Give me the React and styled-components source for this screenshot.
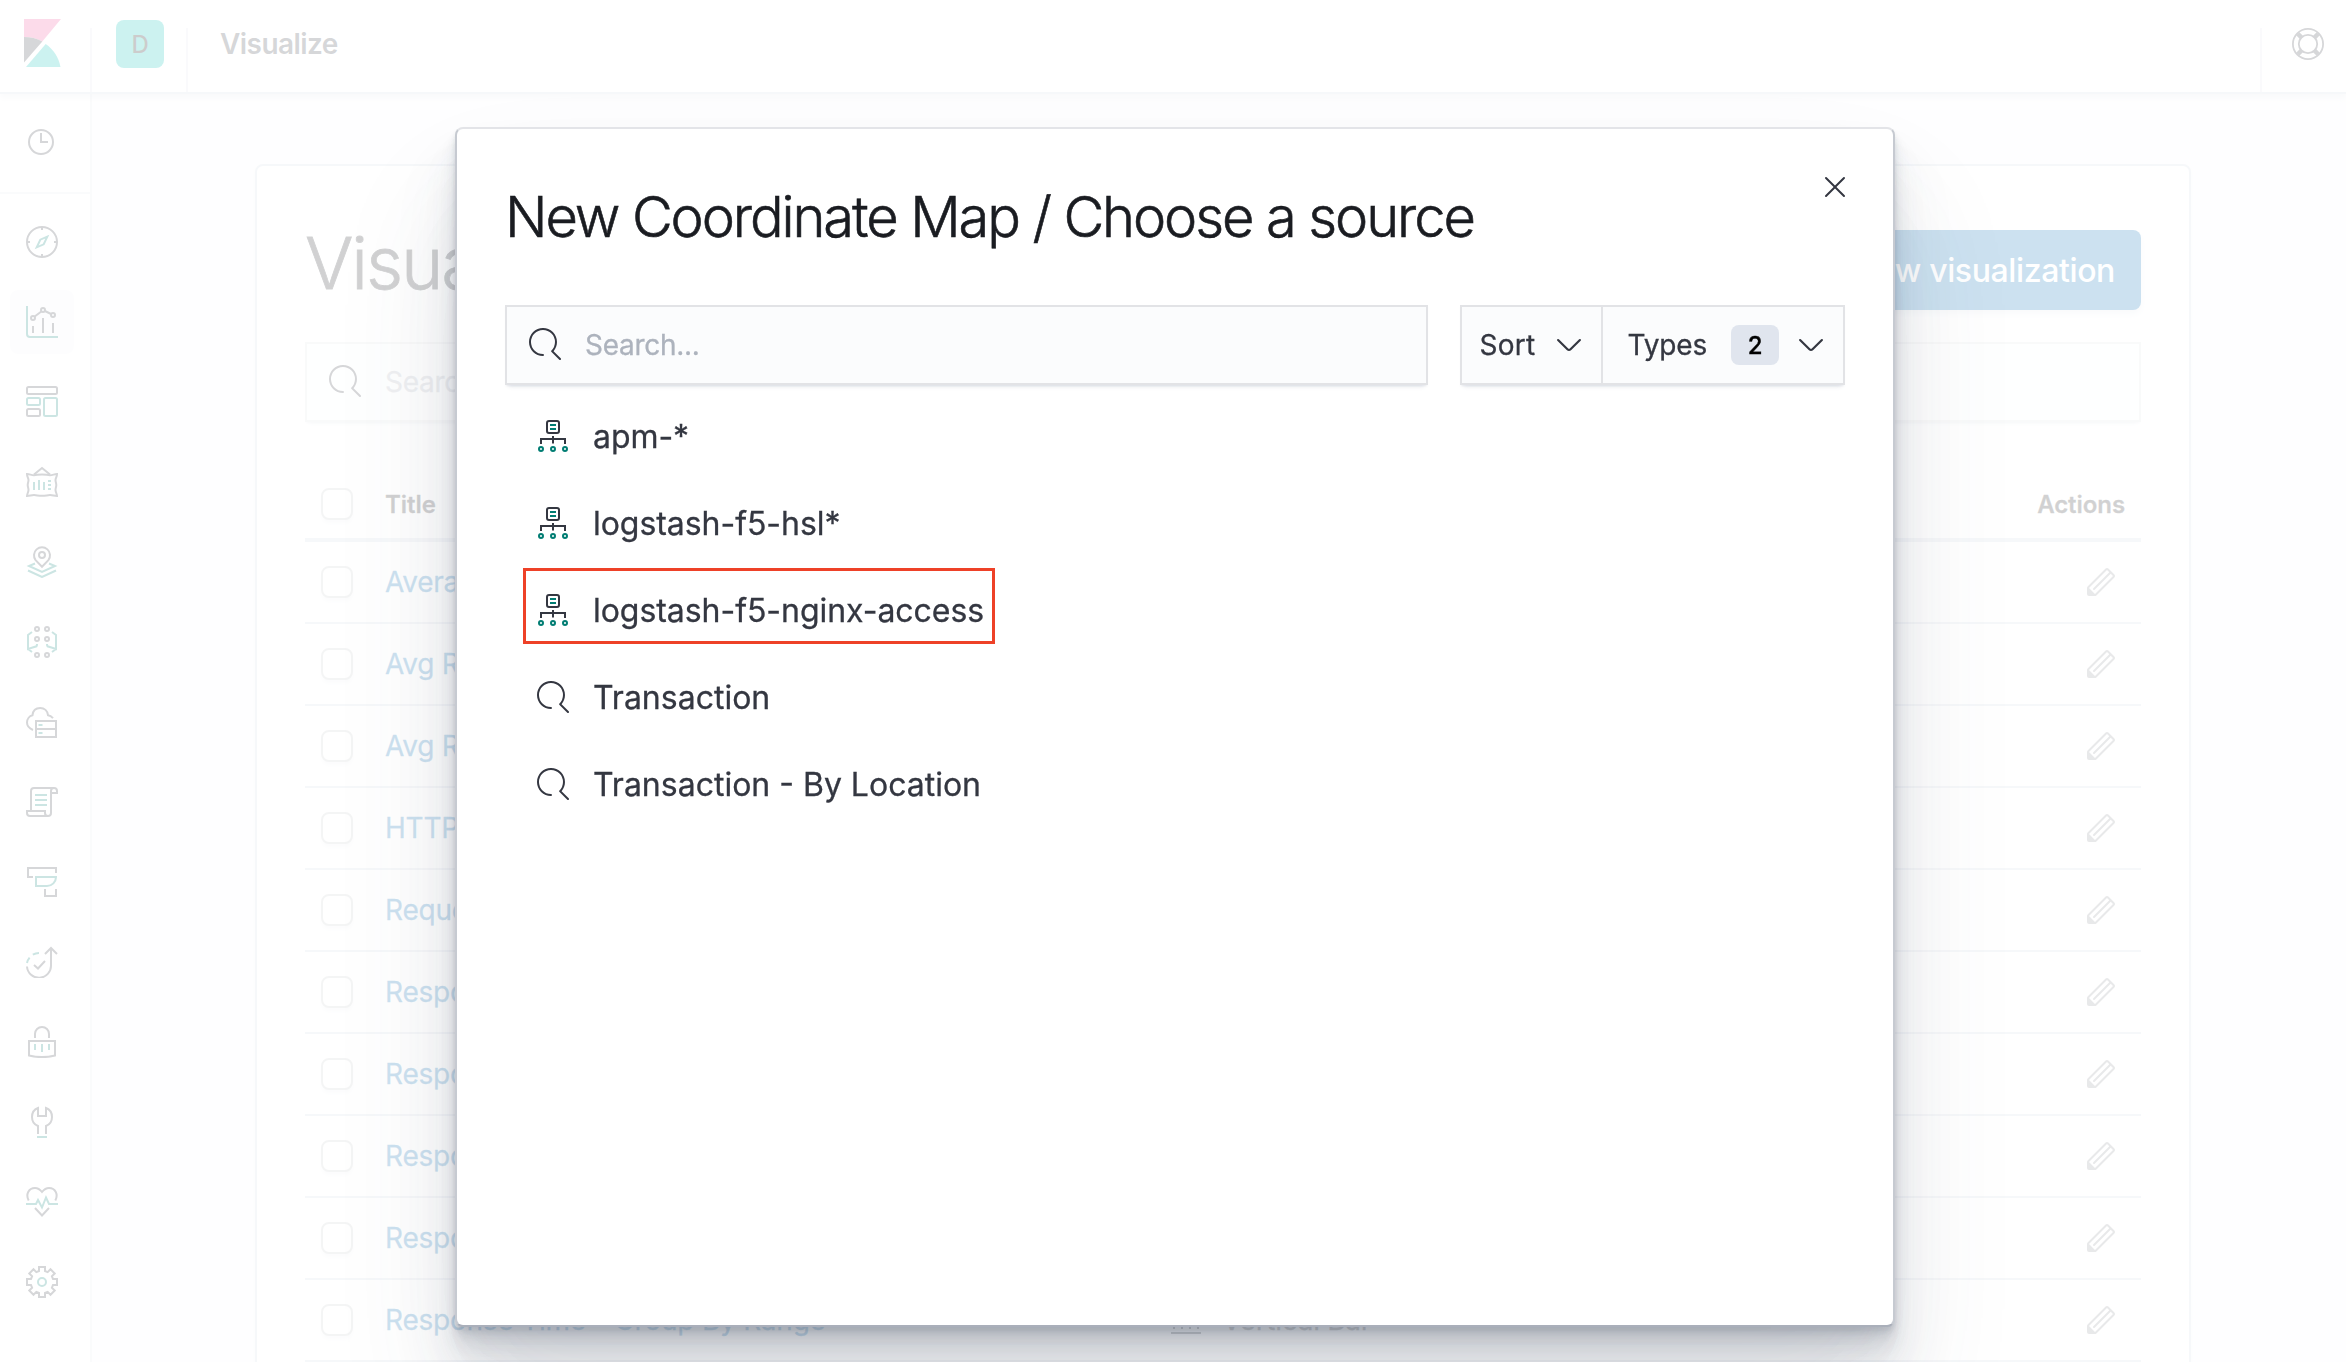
import React from "react";
import styled, { createGlobalStyle, css } from "styled-components";

const INK = "#343741";
const TEAL = "#017d73";
const LINE = "#d3dae6";

const GlobalStyle = createGlobalStyle`
  *, *::before, *::after { box-sizing: border-box; }
  html, body { margin: 0; padding: 0; }
  body {
    width: 2346px;
    height: 1362px;
    overflow: hidden;
    background: #fff;
    color: ${INK};
    font-family: Inter, "Liberation Sans", sans-serif;
    font-size: 28px;
    letter-spacing: -0.005em;
  }
`;

/* ---------- page shell ---------- */

const Page = styled.div`
  display: flex;
  flex-direction: column;
  width: 2346px;
  height: 1362px;
  overflow: hidden;
`;

const Header = styled.header`
  display: flex;
  flex: none;
  align-items: flex-end;
  height: 94px;
  border-bottom: 2px solid ${LINE};
  box-shadow: 0 4px 6px rgba(152, 162, 179, 0.25);
  z-index: 1;
`;

const HeaderCell = styled.div`
  display: flex;
  align-items: center;
  height: 92px;
  padding: 0 0 4px ${(p) => p.$left || 0}px;
  width: ${(p) => (p.$width ? `${p.$width}px` : "auto")};
  flex: ${(p) => (p.$grow ? "1" : "none")};
`;

const LogoCell = styled(HeaderCell)`
  padding-bottom: 6px;
`;

const HeaderRule = styled.div`
  flex: none;
  width: 2px;
  height: 64px;
  background: #e3e7ee;
`;

const SpaceBadge = styled.div`
  display: flex;
  align-items: center;
  justify-content: center;
  width: 48px;
  height: 48px;
  border-radius: 8px;
  background: #00bfb3;
  color: #000;
  font-size: 24px;
  font-weight: 500;
`;

const Breadcrumb = styled.span`
  font-weight: 600;
  letter-spacing: -0.02em;
  line-height: 40px;
`;

const Body = styled.div`
  display: flex;
  flex: 1;
  min-height: 0;
`;

const SideNav = styled.nav`
  display: flex;
  flex: none;
  flex-direction: column;
  width: 92px;
  border-right: 2px solid #e6e9ef;
  background: #fff;
  box-shadow: 2px 0 3px rgba(152, 162, 179, 0.12);
`;

const RecentItem = styled.div`
  display: flex;
  align-items: center;
  height: 100px;
  padding-left: 28px;
  padding-bottom: 2px;
  border-bottom: 2px solid #e6e9ef;
`;

const NavList = styled.div`
  display: flex;
  flex-direction: column;
  gap: 16px;
  padding: 16px 0 0 10px;
`;

const NavItem = styled.div`
  display: flex;
  align-items: center;
  justify-content: center;
  width: 64px;
  height: 64px;
  border-radius: 8px;
  background: ${(p) => (p.$active ? "rgba(211,218,230,0.25)" : "transparent")};
`;

const Main = styled.main`
  flex: 1;
  min-width: 0;
  padding: 70px 155px 0 163px;
  background: #fafbfd;
`;

const Panel = styled.section`
  height: 1300px;
  padding: 64px 48px 0;
  border: 2px solid ${LINE};
  border-radius: 8px;
  background: #fff;
  box-shadow: 0 2px 4px rgba(152, 162, 179, 0.15);
`;

const PanelHead = styled.div`
  display: flex;
  align-items: center;
  justify-content: space-between;
  height: 80px;
`;

const PageTitle = styled.h1`
  margin: -15px 0 0;
  color: #1a1c21;
  font-size: 72px;
  font-weight: 300;
  letter-spacing: -0.03em;
  line-height: 80px;
  -webkit-text-stroke: 0.8px currentColor;
`;

const PrimaryButton = styled.button`
  height: 80px;
  padding: 0 26px;
  border: 0;
  border-radius: 8px;
  background: #006bb4;
  color: #fff;
  font: 500 32px Inter, "Liberation Sans", sans-serif;
  letter-spacing: -0.012em;
  box-shadow: 0 4px 6px rgba(54, 97, 126, 0.15);
`;

/* ---------- form controls ---------- */

const SearchField = styled.div`
  display: flex;
  align-items: center;
  gap: 24px;
  height: 80px;
  padding: 0 22px;
  border: 2px solid #e2e3e6;
  background: #fbfcfd;
  color: #adb3bd;
  letter-spacing: -0.01em;
  -webkit-text-stroke: 0.3px currentColor;
  box-shadow: 0 2px 2px -1px rgba(152, 162, 179, 0.2), 0 6px 4px -4px rgba(152, 162, 179, 0.2);
  svg {
    margin-bottom: 2px;
  }
  ${(p) =>
    p.$width
      ? css`
          width: ${p.$width}px;
          flex: none;
        `
      : css`
          margin-top: 32px;
        `}
`;

const CheckBox = styled.span`
  flex: none;
  width: 32px;
  height: 32px;
  border: 2px solid #c9cbcd;
  border-radius: 8px;
  background: #fff;
  box-shadow: 0 4px 4px -1px rgba(152, 162, 179, 0.2);
`;

/* ---------- table ---------- */

const Table = styled.div`
  display: flex;
  flex-direction: column;
  margin-top: 48px;
`;

const Row = styled.div`
  display: grid;
  grid-template-columns: 64px 785px 1fr auto;
  align-items: center;
  height: ${(p) => (p.$head ? 72 : 82)}px;
  padding: ${(p) => (p.$head ? "0 16px" : "0 24px 0 16px")};
  border-bottom: ${(p) => (p.$head ? 4 : 2)}px solid ${LINE};
  -webkit-text-stroke: 0.3px currentColor;
  ${(p) =>
    p.$head &&
    css`
      color: #1a1c21;
      font-size: 24px;
      font-weight: 600;
      letter-spacing: -0.003em;
    `}
`;

const TitleLink = styled.a`
  color: #006bb4;
  letter-spacing: -0.008em;
  white-space: nowrap;
`;

const TypeCell = styled.span`
  display: flex;
  align-items: center;
  gap: 20px;
  letter-spacing: -0.01em;
`;

const Glyph = styled.svg`
  display: block;
  flex: none;
  width: ${(p) => p.$size || 32}px;
  height: ${(p) => p.$size || 32}px;
  fill: ${(p) => p.$color || INK};
`;

/* ---------- modal ---------- */

const Overlay = styled.div`
  position: fixed;
  inset: 0;
  z-index: 10;
  padding: 127px 0 0 455px;
  background: rgba(255, 255, 255, 0.8);
`;

const Modal = styled.div`
  display: flex;
  flex-direction: column;
  width: 1440px;
  height: 1200px;
  padding: 0 48px;
  border: 2px solid #c6cad1;
  border-top-color: #e3e4e8;
  border-bottom-color: #aaafba;
  border-radius: 8px;
  background: #fff;
  box-shadow: 0 80px 128px 0 rgba(65, 78, 101, 0.1), 0 48px 64px 0 rgba(65, 78, 101, 0.1),
    0 32px 32px 0 rgba(65, 78, 101, 0.1), 0 16px 16px 0 rgba(65, 78, 101, 0.1),
    0 8px 8px 0 rgba(65, 78, 101, 0.1), 0 4px 4px 0 rgba(65, 78, 101, 0.1);
`;

const ModalHead = styled.div`
  display: flex;
  align-items: flex-start;
  justify-content: space-between;
  height: 176px;
`;

const ModalTitle = styled.h2`
  margin: 48px 0 0;
  color: #1a1c21;
  font-size: 56px;
  font-weight: 300;
  letter-spacing: -0.0375em;
  line-height: 80px;
  white-space: nowrap;
  -webkit-text-stroke: 0.6px currentColor;
`;

const CloseButton = styled.span`
  display: flex;
  margin: 42px -6px 0 0;
`;

const Filters = styled.div`
  display: flex;
  justify-content: space-between;
`;

const FilterGroup = styled.div`
  display: flex;
  width: 385px;
  height: 80px;
  border: 2px solid #e2e3e6;
  background: #fbfcfd;
  box-shadow: 0 2px 2px -1px rgba(152, 162, 179, 0.2), 0 6px 4px -4px rgba(152, 162, 179, 0.2);
`;

const FilterButton = styled.div`
  display: flex;
  align-items: center;
  justify-content: space-between;
  width: ${(p) => p.$width}px;
  padding: 0 ${(p) => p.$right}px 0 ${(p) => p.$left}px;
  letter-spacing: ${(p) => p.$tracking || 0};
  -webkit-text-stroke: 0.3px currentColor;
  & + & {
    border-left: 2px solid #e2e3e6;
  }
`;

const BadgePair = styled.span`
  display: flex;
  align-items: center;
  gap: 16px;
`;

const Count = styled.span`
  display: flex;
  align-items: center;
  justify-content: center;
  width: 48px;
  height: 40px;
  border-radius: 8px;
  background: #e0e5ee;
  color: #000;
  font-size: 24px;
  font-weight: 500;
`;

const SourceList = styled.ul`
  display: flex;
  flex-direction: column;
  margin: 8px 0 0;
  padding: 0;
  list-style: none;
`;

const Source = styled.li`
  position: relative;
  display: flex;
  align-items: center;
  gap: 24px;
  align-self: flex-start;
  height: 87px;
  padding-left: 32px;
  font-size: 32px;
  letter-spacing: ${(p) => (p.$pattern ? "-0.0015em" : "0")};
  white-space: nowrap;
  -webkit-text-stroke: 0.3px currentColor;
  svg {
    margin-bottom: 1px;
  }
`;

const Highlight = styled.span`
  position: absolute;
  top: 1px;
  left: 18px;
  width: 472px;
  height: 76px;
  border: 3px solid #ee4128;
`;

/* ---------- icons ---------- */

const Line32 = ({ children, size = 32 }) => (
  <Glyph $size={size} viewBox="0 0 32 32">
    <g fill="none" stroke={INK} strokeWidth="2">
      {children}
    </g>
  </Glyph>
);

const SearchIcon = () => (
  <Glyph viewBox="0 0 16 16">
    <path d="M11.271 11.978l3.872 3.873a.502.502 0 00.708 0 .502.502 0 000-.708l-3.565-3.564c2.38-2.747 2.267-6.923-.342-9.532-2.73-2.73-7.17-2.73-9.898 0-2.728 2.729-2.728 7.17 0 9.9a6.955 6.955 0 004.949 2.05.5.5 0 000-1 5.96 5.96 0 01-4.242-1.757 6.01 6.01 0 010-8.486 6.004 6.004 0 018.484 0 6.01 6.01 0 010 8.486.5.5 0 000 .708z" />
  </Glyph>
);

const ChevronDown = () => (
  <Glyph viewBox="0 0 16 16">
    <path d="M13.069 5.157L8.384 9.768a.546.546 0 01-.768 0L2.93 5.158a.552.552 0 00-.771 0 .53.53 0 000 .759l4.684 4.61c.641.631 1.672.63 2.312 0l4.684-4.61a.53.53 0 000-.76.552.552 0 00-.771 0z" />
  </Glyph>
);

const CrossIcon = () => (
  <Glyph viewBox="0 0 16 16">
    <path d="M7.293 8L3.146 3.854a.5.5 0 11.708-.708L8 7.293l4.146-4.147a.5.5 0 01.708.708L8.707 8l4.147 4.146a.5.5 0 01-.708.708L8 8.707l-4.146 4.147a.5.5 0 01-.708-.708L7.293 8z" />
  </Glyph>
);

const PencilIcon = () => (
  <Glyph viewBox="0 0 16 16" $color="#8e9095">
    <path d="M12.148 3.148L11 2l-9 9v3h3l9-9-1.144-1.144-8.002 7.998a.502.502 0 01-.708 0 .502.502 0 010-.708l8.002-7.998zM11 1c.256 0 .512.098.707.293l3 3a.999.999 0 010 1.414l-9 9A.997.997 0 015 15H2a1 1 0 01-1-1v-3c0-.265.105-.52.293-.707l9-9A.997.997 0 0111 1zM5 14H2v-3l3 3z" />
  </Glyph>
);

const IndexPatternIcon = () => (
  <Line32>
    <rect x="10" y="1" width="12" height="12" rx="2" />
    <path d="M16 16v7.5M4 24v-5h24v5" />
    <g stroke={TEAL}>
      <path d="M13 5h6M13 9h6" />
      <circle cx="4" cy="29" r="2" />
      <circle cx="16" cy="29" r="2" />
      <circle cx="28" cy="29" r="2" />
    </g>
  </Line32>
);

const BarIcon = () => (
  <Line32>
    <path d="M1 29h30M4 25V13M12 25V5M20 25V9M28 25V16" />
  </Line32>
);

const ClockIcon = () => (
  <Glyph $size={26} viewBox="0 0 26 26">
    <g fill="none" stroke={INK} strokeWidth="2">
      <circle cx="13" cy="13" r="12" />
      <path d="M13 4v9h7" />
    </g>
  </Glyph>
);

const HelpIcon = () => (
  <Line32>
    <g strokeWidth="1.8">
      <circle cx="16" cy="16" r="15.1" />
      <circle cx="16" cy="16" r="9.2" />
    </g>
    <path strokeWidth="4.4" d="M5.8 5.8l3.8 3.8M26.2 5.8l-3.8 3.8M5.8 26.2l3.8-3.8M26.2 26.2l-3.8-3.8" />
  </Line32>
);

const KibanaLogo = () => (
  <svg width="38" height="48" viewBox="0 0 38 48">
    <path fill="#f04e98" d="M0 0h37L18.3 22.4C12.8 19.4 6.6 18 0 18z" />
    <path fill={INK} d="M0 18c6.600 0 12.800 1.400 18.300 4.400L0 43.500z" />
    <path fill="#00bfb3" d="M21.700 25C29.300 30.200 34.700 38.400 36.500 48H2z" />
  </svg>
);

const gearPoints = Array.from({ length: 8 }, (_, i) => {
  const a = (i * Math.PI) / 4;
  return [[-3, -11], [-3, -15], [3, -15], [3, -11]]
    .map(([x, y]) => {
      const px = 16 + x * Math.cos(a) - y * Math.sin(a);
      const py = 16 + x * Math.sin(a) + y * Math.cos(a);
      return `${px.toFixed(2)},${py.toFixed(2)}`;
    })
    .join(" ");
}).join(" ");

const navIcons = {
  discover: (
    <>
      <circle cx="16" cy="16" r="15" />
      <path d="M16 1v3M16 28v3M1 16h3M28 16h3" />
      <path stroke={TEAL} d="M21.300 10.700l-7 3-3.600 7.600 7-3z" />
    </>
  ),
  visualize: (
    <>
      <path stroke={TEAL} d="M1 0v28a3 3 0 0 0 3 3h28" />
      <circle cx="7" cy="12" r="2" />
      <circle cx="17" cy="4" r="2" />
      <circle cx="27" cy="9" r="2" />
      <path d="M8.700 10.500l6.600-5M19 5l6 3M7 20v7M17 12v15M27 17v10" />
    </>
  ),
  dashboard: (
    <>
      <rect x="1" y="1" width="30" height="7" rx="1.500" />
      <rect x="1" y="23" width="13" height="7" rx="1.500" />
      <g stroke={TEAL}>
        <rect x="1" y="12" width="13" height="7" rx="1.500" />
        <rect x="18" y="12" width="13" height="18" rx="1.500" />
      </g>
    </>
  ),
  canvas: (
    <>
      <path d="M8 8.500L16 2l8 6.500" />
      <path d="M1 8c3 0 4 1.200 7 1.200S12 8.400 16 8.400s5 .8 8 .8S28 8 31 8c0 3-1.500 4-1.500 6s.8 3 .8 5-.8 3-.8 5 1.500 4 1.500 6c-3 0-4-.9-7-.9s-4 .7-8 .7-5-.7-8-.7-4 .9-7 .9c0-2 1.500-4 1.500-6s-.8-3-.8-5 .8-3 .8-5S1 11 1 8z" />
      <path stroke={TEAL} d="M8 16v8M13 14v10M18 16v8M22 15h3M22 19h3M22 23h3" />
    </>
  ),
  maps: (
    <>
      <path d="M16 20.700L9.600 14.100A8 8 0 1 1 22.400 14.100z" />
      <circle cx="16" cy="9" r="3" />
      <path stroke={TEAL} d="M9 17.500L3 20l13 6 13-6-6-2.500M2 24.500L16 31l14-6.500" />
    </>
  ),
  ml: (
    <>
      {[3, 13, 29].map((y) => (
        <React.Fragment key={y}>
          <circle cx="11" cy={y} r="2" />
          <circle cx="21" cy={y} r="2" />
        </React.Fragment>
      ))}
      <path
        stroke={TEAL}
        d="M6 6L2 9v14l8.500-2.700c.4-.6.5-1.300.5-2.300M2 23l4 3M26 6l4 3v14l-8.500-2.700c-.4-.6-.5-1.300-.5-2.300M30 23l-4 3"
      />
    </>
  ),
  infra: (
    <>
      <path d="M7 24C3.500 22.500 1 20 1 16.500c0-3.600 2.500-6.600 5.500-7.300C7 4.500 10 2 14.200 2S21.500 5 22 9.200c2 .3 3.500 1.300 5 3" />
      <rect x="10" y="15" width="20" height="16" />
      <path d="M10 23h20" />
      <path stroke={TEAL} d="M12.500 19h4M12.500 27h4" />
    </>
  ),
  logs: (
    <>
      <path d="M5 24V5a3 3 0 0 1 3-3h20a3 3 0 0 1 3 3v2h-6" />
      <path d="M28 2a3 3 0 0 0-3 3v22a3 3 0 0 1-3 3H4a3 3 0 0 1-3-3v-2h18v2a3 3 0 0 0 3 3" />
      <path stroke={TEAL} d="M9 9h12M9 14h12M9 19h12" />
    </>
  ),
  apm: (
    <>
      <path d="M7 11H2V2h28v5M19 23v7h11v-7" />
      <path stroke={TEAL} d="M10 11h20c0 5-4 9-9 9H10z" />
    </>
  ),
  uptime: (
    <>
      <path d="M1 20.500A12 12 0 0 0 25 19V2M19 8l6-6 6 6M8 19l4 3.500 7-7.500" />
      <path stroke={TEAL} d="M1 17a12 12 0 0 1 2.600-5.400M6.800 8.700A12 12 0 0 1 13 7" />
    </>
  ),
  siem: (
    <>
      <path d="M9 12V8a7 7 0 0 1 14 0v4M3 15h26v14.500c-8 2-18 2-26 0z" />
      <path stroke={TEAL} d="M9 18v6M16 18v8M23 18v6" />
    </>
  ),
  devtools: (
    <>
      <path d="M12 28v-8c-4-1.500-6-5-6-9s2-7.500 6-9v8h8V2c4 1.500 6 5 6 9s-2 7.500-6 9v8" />
      <path stroke={TEAL} d="M11 31h10" />
    </>
  ),
  monitoring: (
    <>
      <path d="M2.700 14.500C-.5 8.500 2.500 2 9 2c3 0 5 1.500 7 4 2-2.500 4-4 7-4 6.500 0 9.500 6.500 6.300 12.500M9 22l7 7.500 7-7.500" />
      <path stroke={TEAL} d="M0 18h10l2-4 4 7.500L20 11.500l3 6.500h9" />
    </>
  ),
  management: (
    <>
      <polygon points={gearPoints} />
      <circle stroke={TEAL} cx="16" cy="16" r="4" />
    </>
  ),
};

/* ---------- data ---------- */

const rows = [
  "Average Response Time",
  "Avg Response Time",
  "Avg Response Time",
  "HTTP Status",
  "Requests",
  "Response Code",
  "Response Code",
  "Response Time",
  "Response Time",
  "Response Time - Group By Range",
];

const sources = [
  { name: "apm-*", pattern: true },
  { name: "logstash-f5-hsl*", pattern: true },
  { name: "logstash-f5-nginx-access", pattern: true, marked: true },
  { name: "Transaction" },
  { name: "Transaction - By Location" },
];

export default function App() {
  return (
    <>
      <GlobalStyle />
      <Page>
        <Header>
          <LogoCell $width={90} $left={24}>
            <KibanaLogo />
          </LogoCell>
          <HeaderRule />
          <HeaderCell $width={94} $left={24}>
            <SpaceBadge>D</SpaceBadge>
          </HeaderCell>
          <HeaderRule />
          <HeaderCell $grow $left={32}>
            <Breadcrumb>Visualize</Breadcrumb>
          </HeaderCell>
          <HeaderRule />
          <HeaderCell $width={84} $left={30}>
            <HelpIcon />
          </HeaderCell>
        </Header>
        <Body>
          <SideNav>
            <RecentItem>
              <ClockIcon />
            </RecentItem>
            <NavList>
              {Object.entries(navIcons).map(([name, icon]) => (
                <NavItem key={name} $active={name === "visualize"}>
                  <Line32>{icon}</Line32>
                </NavItem>
              ))}
            </NavList>
          </SideNav>
          <Main>
            <Panel>
              <PanelHead>
                <PageTitle>Visualizations</PageTitle>
                <PrimaryButton>Create new visualization</PrimaryButton>
              </PanelHead>
              <SearchField>
                <SearchIcon />
                Search...
              </SearchField>
              <Table>
                <Row $head>
                  <CheckBox />
                  <span>Title</span>
                  <span>Type</span>
                  <span>Actions</span>
                </Row>
                {rows.map((title, i) => (
                  <Row key={i}>
                    <CheckBox />
                    <TitleLink>{title}</TitleLink>
                    <TypeCell>
                      <BarIcon />
                      Vertical Bar
                    </TypeCell>
                    <PencilIcon />
                  </Row>
                ))}
              </Table>
            </Panel>
          </Main>
        </Body>
      </Page>
      <Overlay>
        <Modal>
          <ModalHead>
            <ModalTitle>New Coordinate Map / Choose a source</ModalTitle>
            <CloseButton>
              <CrossIcon />
            </CloseButton>
          </ModalHead>
          <Filters>
            <SearchField $width={923}>
              <SearchIcon />
              Search...
            </SearchField>
            <FilterGroup>
              <FilterButton $width={139} $left={17.5} $right={16} $tracking="0.008em">
                Sort
                <ChevronDown />
              </FilterButton>
              <FilterButton $width={242} $left={24.5} $right={16} $tracking="-0.004em">
                Types
                <BadgePair>
                  <Count>2</Count>
                  <ChevronDown />
                </BadgePair>
              </FilterButton>
            </FilterGroup>
          </Filters>
          <SourceList>
            {sources.map((s) => (
              <Source key={s.name} $pattern={s.pattern}>
                {s.marked && <Highlight />}
                {s.pattern ? <IndexPatternIcon /> : <SearchIcon />}
                {s.name}
              </Source>
            ))}
          </SourceList>
        </Modal>
      </Overlay>
    </>
  );
}
